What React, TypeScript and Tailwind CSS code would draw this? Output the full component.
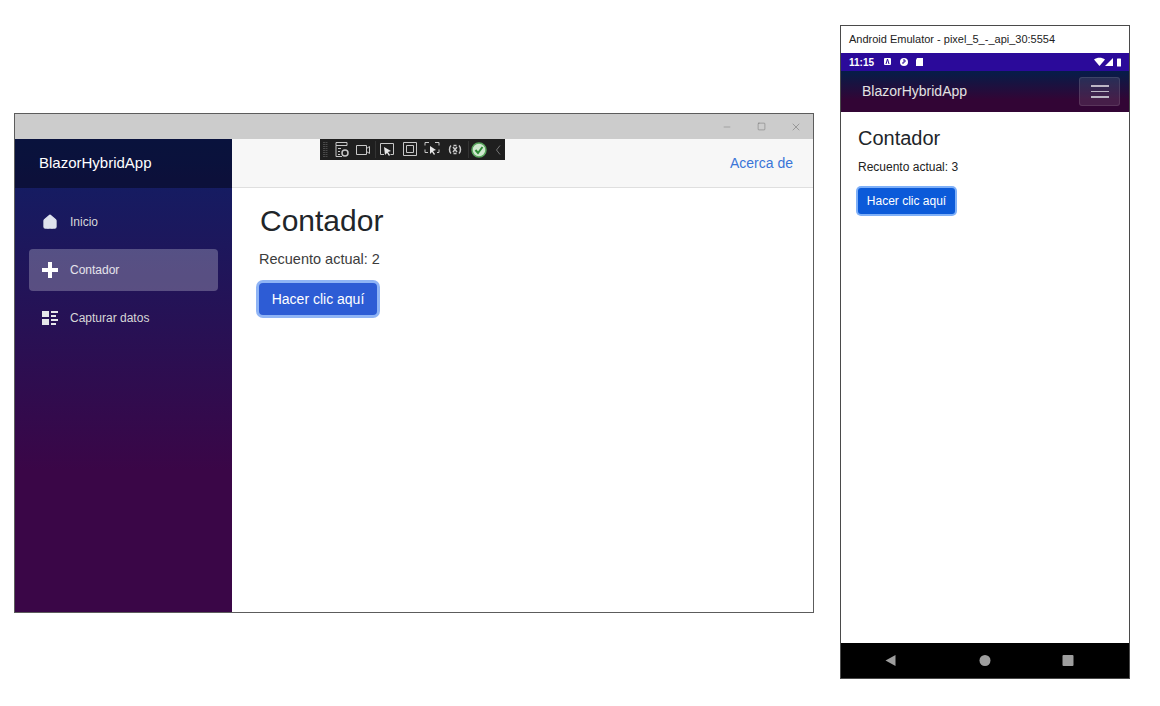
import { Home, Minus, Square, X } from "lucide-react";

const FONT = "font-['Liberation_Sans',Arial,sans-serif]";

function ToolbarIcons() {
  return (
    <svg width="185" height="21" viewBox="0 0 185 21" fill="none" stroke="#c8c8c8" strokeWidth="1">
      {/* grip */}
      <path d="M4 3v15M6.500 3v15" stroke="#4a4a4a" strokeWidth="2" strokeDasharray="1 1" />
      {/* live tree */}
      <path d="M16 3.500h11v3h-11zM16 6.500v11h6M18 9.500h3M18 12.500h2M18 15.500h2" />
      <circle cx="25" cy="14" r="3" strokeWidth="1.500" />
      {/* camera */}
      <path d="M36.500 6.500h10v9h-10zM46.500 9.500l3-2v7l-3-2" />
      <path d="M55.500 2v17" stroke="#333" />
      {/* select element */}
      <path d="M64 15.500h-3.500v-11h13v11h-3" />
      <path d="M64 8l7 4-3 1 2 3-1 1-2-3-2 2z" fill="#e8e8e8" stroke="none" />
      {/* adorners */}
      <path d="M83.500 3.500h13v13h-13zM86.500 6.500h7v7h-7z" />
      {/* track focus */}
      <path d="M105 6.500v-3h4M115 3.500h4v3M105 10.500v3h3M119 10.500v3h-2" />
      <path d="M110 7l6 4-3 1 2 3-1 1-2-3-2 2z" fill="#e8e8e8" stroke="none" />
      {/* hot reload */}
      <path d="M131 6.500c-2 2-2 6 0 8M139 6.500c2 2 2 6 0 8M133 8l4 5M137 8l-4 5M133.500 6.500h3M133.500 14.500h3" strokeWidth="1.500" />
      <path d="M148.500 2v17" stroke="#333" />
      {/* status check */}
      <circle cx="159" cy="11" r="7" fill="#cfe8cf" stroke="#58a55c" strokeWidth="1.500" />
      <path d="M155.500 11l2.500 3 4.500-6" stroke="#2c8c35" strokeWidth="2" />
      {/* chevron */}
      <path d="M180 6.500l-3.500 4.500 3.500 4.500" stroke="#777" />
    </svg>
  );
}

function GridIcon() {
  return (
    <svg width="16" height="14" viewBox="0 0 16 14" fill="#e6e6ea">
      <rect x="0" y="0" width="7" height="6" />
      <rect x="0" y="8" width="7" height="6" />
      <rect x="9" y="0" width="7" height="2" />
      <rect x="9" y="4" width="5" height="2" />
      <rect x="9" y="8" width="7" height="2" />
      <rect x="9" y="12" width="5" height="2" />
    </svg>
  );
}

function PlusIcon() {
  return (
    <svg width="16" height="16" viewBox="0 0 16 16" fill="#ffffff">
      <path d="M6 0h4v6h6v4h-6v6H6v-6H0V6h6z" />
    </svg>
  );
}

function NavItem({ icon, label, active }: { icon: React.ReactNode; label: string; active?: boolean }) {
  return (
    <div
      className={`flex h-[42px] items-center rounded-[4px] pl-[13px] text-[12px] ${
        active ? "bg-white/25 text-white/85" : "text-[#d7d7d7]"
      }`}
    >
      <span className="flex w-[16px] justify-center">{icon}</span>
      <span className="ml-[12px]">{label}</span>
    </div>
  );
}

function DesktopWindow() {
  return (
    <div className="absolute left-[14px] top-[113px] flex h-[500px] w-[800px] flex-col border border-[#5c5c5c] bg-white">
      <div className="flex h-[25px] shrink-0 items-center justify-end bg-[#cccccc] pr-[11px] text-[#666]">
        <Minus size={10} strokeWidth={1} />
        <Square size={9} strokeWidth={1.2} className="ml-[25px]" />
        <X size={12} strokeWidth={1} className="ml-[24px]" />
      </div>
      <div className="flex min-h-0 flex-1">
        <aside className="flex w-[217px] shrink-0 flex-col bg-[linear-gradient(180deg,#0f1f66_0%,#3a0647_70%)]">
          <div className="flex h-[49px] shrink-0 items-center bg-black/40 pl-[24px] text-[15px] text-white">
            BlazorHybridApp
          </div>
          <nav className="flex flex-col gap-[6px] px-[14px] pt-[13px]">
            <NavItem icon={<Home size={16} fill="#dfe3ee" stroke="#dfe3ee" />} label="Inicio" />
            <NavItem icon={<PlusIcon />} label="Contador" active />
            <NavItem icon={<GridIcon />} label="Capturar datos" />
          </nav>
        </aside>
        <main className="min-w-0 flex-1">
          <header className="relative flex h-[49px] items-center justify-end border-b border-[#dfdfdf] bg-[#f7f7f7] pr-[20px]">
            <div className="absolute left-[88px] top-0 h-[21px] w-[185px] bg-[#1f1f1f]">
              <ToolbarIcons />
            </div>
            <a className="text-[14px] text-[#3a75d8]">Acerca de</a>
          </header>
          <div className="pl-[27px] pt-[15px]">
            <h1 className="pl-[1px] text-[30px] leading-[36px] text-[#212529]">Contador</h1>
            <p className="mt-[10px] text-[14.500px] leading-[20px] text-[#3c3c3c]">Recuento actual: 2</p>
            <button className="mt-[14px] h-[32px] w-[118px] rounded-[4px] bg-[#2d5cd5] text-[14px] text-white shadow-[0_0_0_3px_#8fb4f5]">
              Hacer clic aquí
            </button>
          </div>
        </main>
      </div>
    </div>
  );
}

function StatusBar() {
  return (
    <div className="flex h-[18px] shrink-0 items-center bg-[#2b0a9a] pl-[8px] pr-[6px] text-[10px] font-bold text-white">
      <span>11:15</span>
      <svg width="70" height="10" viewBox="0 0 70 10" fill="#fff" className="ml-[9px]">
        <rect x="1" y="1" width="7" height="7" rx="1" />
        <path d="M3 7l1.500-5 1.500 5" stroke="#2b0a9a" fill="none" />
        <circle cx="21" cy="5" r="4" />
        <path d="M20 3h2v2h-2v2" stroke="#2b0a9a" fill="none" />
        <path d="M34 1h6v8h-7V3z" />
      </svg>
      <svg width="30" height="10" viewBox="0 0 30 10" fill="#fff" className="ml-auto">
        <path d="M1 2.500c3-2.500 8-2.500 11 0l-5.500 6.500z" />
        <path d="M20 1v8h-8z" />
        <rect x="24" y="1.500" width="4" height="8" rx="0.500" />
      </svg>
    </div>
  );
}

function PhoneWindow() {
  return (
    <div className="absolute left-[840px] top-[25px] flex h-[654px] w-[290px] flex-col border border-[#4a4a4a] bg-white">
      <div className="flex h-[27px] shrink-0 items-center pl-[8px] text-[11px] text-[#222]">
        Android Emulator - pixel_5_-_api_30:5554
      </div>
      <StatusBar />
      <div className="flex h-[41px] shrink-0 items-center justify-between bg-[linear-gradient(180deg,#051d49_0%,#320535_70%)] pl-[21px] pr-[9px] text-[14px] text-[#e2e2e2]">
        <span>BlazorHybridApp</span>
        <div className="flex h-[29px] w-[41px] flex-col items-center justify-center gap-[4px] rounded-[3px] border border-white/10 bg-white/10">
          <span className="h-[1.500px] w-[18px] bg-[#bdb6c4]" />
          <span className="h-[1.500px] w-[18px] bg-[#bdb6c4]" />
          <span className="h-[1.500px] w-[18px] bg-[#bdb6c4]" />
        </div>
      </div>
      <div className="flex-1 pl-[17px] pt-[13px]">
        <h1 className="text-[20px] leading-[26px] text-[#212529]">Contador</h1>
        <p className="mt-[8px] text-[12px] leading-[16px] text-[#222]">Recuento actual: 3</p>
        <button className="mt-[13px] h-[26px] w-[97px] rounded-[3px] bg-[#0b5ad9] text-[12px] text-white shadow-[0_0_0_2px_#7fb0f8]">
          Hacer clic aquí
        </button>
      </div>
      <div className="flex h-[35px] shrink-0 items-center bg-black">
        <svg width="288" height="35" viewBox="0 0 288 35" fill="#9e9e9e">
          <path d="M54.500 12v11l-10-5.500z" />
          <circle cx="144" cy="17.500" r="5.500" />
          <rect x="221.500" y="12" width="11" height="11" rx="1" />
        </svg>
      </div>
    </div>
  );
}

export default function App() {
  return (
    <div className={`relative h-[706px] w-[1160px] overflow-hidden bg-white ${FONT}`}>
      <DesktopWindow />
      <PhoneWindow />
    </div>
  );
}
